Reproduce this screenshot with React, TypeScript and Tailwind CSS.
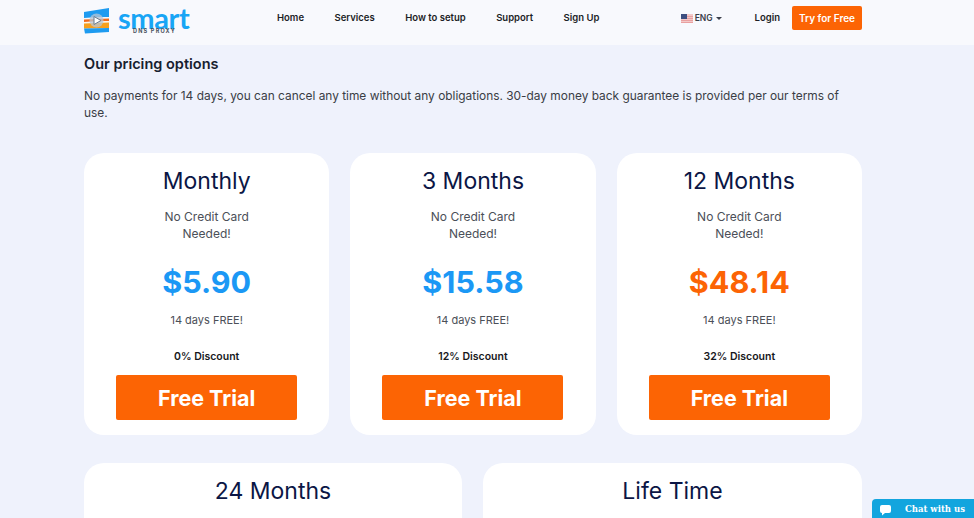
import React from "react";

const font = { fontFamily: "Inter, 'Liberation Sans', sans-serif" };

function Logo() {
  return (
    <div className="flex items-start w-[108px] h-[30px] mt-[9px]">
      <svg width="28" height="27" viewBox="0 0 28 27" className="shrink-0">
        <path d="M1 4 L26 0 V9 L1 10 Z" fill="#1e9bf0" />
        <path d="M1 10 L26 9 V10.5 L1 11.5 Z" fill="#f5f8fc" />
        <path d="M1 11.5 L26 10.5 V13 L1 14 Z" fill="#f26a1b" />
        <path d="M1 14 L26 13 V14.5 L1 15.5 Z" fill="#fdf6ea" />
        <path d="M1 15.5 L26 14.5 V20 L1 20.5 Z" fill="#f7a01d" />
        <path d="M1 20.5 L26 20 V24 L2 25.5 Z" fill="#1e9bf0" />
        <circle cx="13.5" cy="12.5" r="7" fill="#b9c6d4" fillOpacity="0.75" />
        <path d="M11 8.5 L18 12.5 L11 16.5 Z" fill="#ffffff" stroke="#6b7c8e" strokeWidth="1" />
      </svg>
      <div className="ml-[7px] flex flex-col w-[72px]">
        <span className="block text-[29px] leading-[20px] font-bold text-[#18a5f5] tracking-[-0.4px]" style={{ fontFamily: "Lato, sans-serif" }}>smart</span>
        <span className="pl-[15px] text-[5.5px] leading-[6px] font-bold tracking-[1.2px] text-[#4a5260] whitespace-nowrap">DNS PROXY</span>
      </div>
    </div>
  );
}

function Flag() {
  return (
    <svg width="12" height="9" viewBox="0 0 12 9" className="mr-[2px]">
      <rect width="12" height="9" fill="#f3c9c9" />
      <rect y="2" width="12" height="1" fill="#e9a0a0" />
      <rect y="4" width="12" height="1" fill="#e9a0a0" />
      <rect y="6" width="12" height="1" fill="#e9a0a0" />
      <rect y="8" width="12" height="1" fill="#e9a0a0" />
      <rect width="6" height="5" fill="#3d4f80" />
    </svg>
  );
}

function Card({ title, price, discount, orange }: { title: string; price: string; discount: string; orange?: boolean }) {
  return (
    <div className="bg-white rounded-[20px] h-[282px] flex flex-col items-center">
      <h3 className="mt-[14px] text-[23px] leading-[28px] text-[#0b1645] font-normal">{title}</h3>
      <p className="mt-[13px] text-[12px] leading-[17px] text-[#4b4f58] text-center w-[110px]">No Credit Card Needed!</p>
      <div className={`mt-[18px] text-[30.5px] leading-[44px] font-bold ${orange ? "text-[#fc6404]" : "text-[#1b98f5]"}`}>{price}</div>
      <p className="mt-[8px] text-[11px] leading-[17px] text-[#4b4f58]">14 days FREE!</p>
      <p className="mt-[19px] text-[10.5px] leading-[17px] font-semibold text-[#17181c]">{discount}</p>
      <button className="mt-[10px] w-[181px] h-[45px] pt-[2px] rounded-[2px] bg-[#fc6404] text-white text-[21.5px] font-bold">Free Trial</button>
    </div>
  );
}

function TopCard({ title }: { title: string }) {
  return (
    <div className="bg-white rounded-t-[20px] h-[60px] flex justify-center">
      <h3 className="mt-[14px] text-[23px] leading-[28px] text-[#0b1645] font-normal">{title}</h3>
    </div>
  );
}

export default function App() {
  return (
    <div className="relative w-[974px] h-[518px] overflow-hidden bg-[#eff2fc]" style={font}>
      <header className="h-[45px] bg-[#f8f9fd] flex items-center pl-[83px] pr-[112px] pb-[9px]">
        <Logo />
        <nav className="ml-[86px] pt-[1px] flex items-center gap-[30.5px] text-[9.5px] font-semibold text-[#1c1e26]">
          <a>Home</a>
          <a>Services</a>
          <a>How to setup</a>
          <a>Support</a>
          <a>Sign Up</a>
        </nav>
        <div className="ml-auto flex items-center text-[8.5px] font-semibold text-[#3b3f4a]">
          <Flag />
          <span>ENG</span>
          <span className="ml-[3px] w-0 h-0 border-x-[3px] border-x-transparent border-t-[3px] border-t-[#3b3f4a]" />
        </div>
        <a className="ml-[33px] pt-[1px] text-[9.5px] font-semibold text-[#1c1e26]">Login</a>
        <button className="ml-[12px] w-[70px] h-[24px] rounded-[2px] bg-[#fc6404] text-white text-[10px] font-semibold">Try for Free</button>
      </header>
      <main className="px-[84px] w-[946px]">
        <h2 className="mt-[9px] text-[14.5px] leading-[20px] font-semibold text-[#17202f]">Our pricing options</h2>
        <p className="mt-[13px] text-[11.9px] leading-[17px] text-[#3a3d45]">
          No payments for 14 days, you can cancel any time without any obligations. 30-day money back guarantee is provided per our terms of use.
        </p>
        <div className="mt-[32px] grid grid-cols-3 gap-x-[21px]">
          <Card title="Monthly" price="$5.90" discount="0% Discount" />
          <Card title="3 Months" price="$15.58" discount="12% Discount" />
          <Card title="12 Months" price="$48.14" discount="32% Discount" orange />
        </div>
        <div className="mt-[28px] grid grid-cols-[378px_379px] gap-x-[21px]">
          <TopCard title="24 Months" />
          <TopCard title="Life Time" />
        </div>
      </main>
      <div className="absolute right-0 bottom-0 w-[102px] h-[19px] rounded-tl-[4px] bg-[#12a5de] flex items-center pt-[2px]">
        <div className="w-[26px] h-full flex items-center justify-center">
          <svg width="13" height="12" viewBox="0 0 13 12">
            <path d="M3 1 H10 A2 2 0 0 1 12 3 V7 A2 2 0 0 1 10 9 H6 L3 11.5 V9 A2 2 0 0 1 1 7 V3 A2 2 0 0 1 3 1 Z" fill="#fff" />
          </svg>
        </div>
        <span className="ml-[7px] text-[8.5px] font-bold text-white whitespace-nowrap" style={{ fontFamily: "'DejaVu Serif', serif" }}>Chat with us</span>
      </div>
    </div>
  );
}
